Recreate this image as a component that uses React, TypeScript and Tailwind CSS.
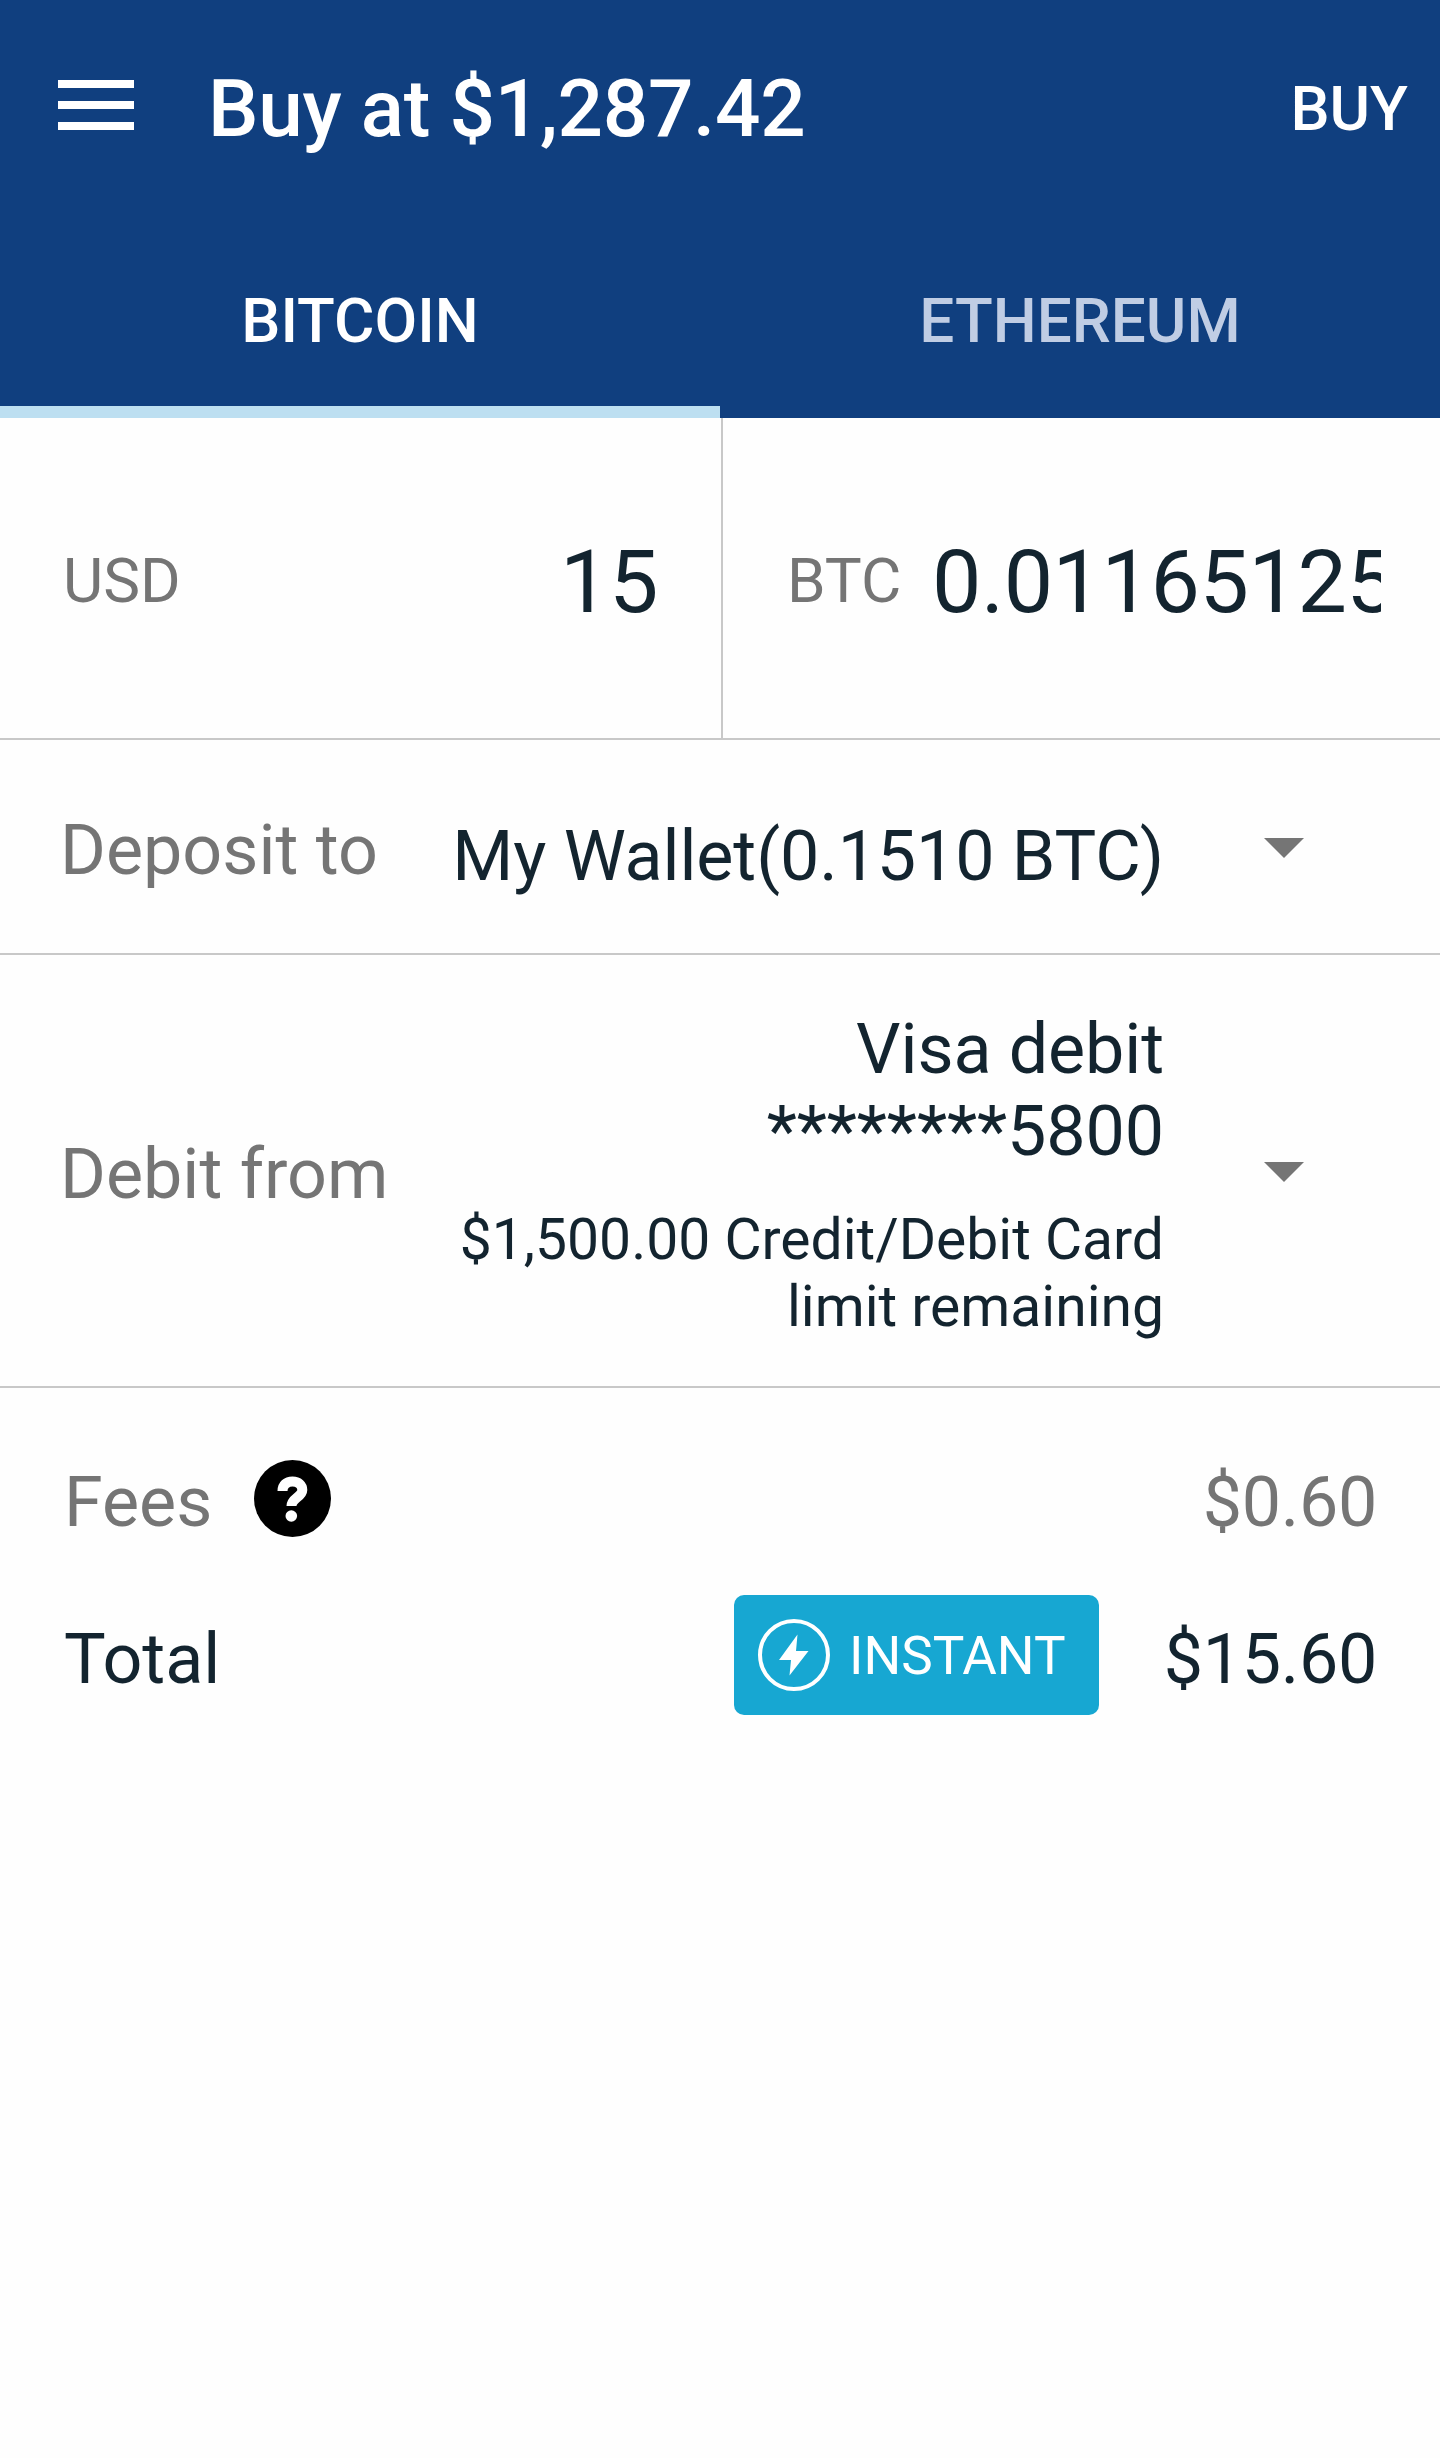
import React from "react";

function Caret() {
  return (
    <svg className="ml-[100px] mt-[3px] block h-5 w-10 shrink-0" viewBox="0 0 40 20" fill="#757575">
      <path d="M0 0H40L20 20Z" />
    </svg>
  );
}

export default function App() {
  return (
    <div className="h-[2458px] w-[1440px] overflow-hidden bg-[#fefefe] font-['Roboto',sans-serif] text-[#13242f]">
      <header className="flex h-[418px] flex-col bg-[#103f7f] font-medium text-white">
        <div className="flex h-[218px] items-center pl-[58px] pr-[32px]">
          <svg className="mb-[8px] block h-[50px] w-[76px]" viewBox="0 0 76 50" fill="white">
            <path d="M0 0h76v8H0zM0 21h76v8H0zM0 42h76v8H0z" />
          </svg>
          <h1 className="ml-[74px] flex-1 text-[80px] tracking-[-0.3px]">Buy at $1,287.42</h1>
          <button className="mb-[2px] text-[62px]">BUY</button>
        </div>
        <nav className="grid h-[200px] grid-cols-2 text-[62px]">
          <div className="flex items-center justify-center border-b-[12px] border-[#bddff1] pt-[16px]">BITCOIN</div>
          <div className="flex items-center justify-center border-b-[12px] border-transparent pt-[16px] text-[#c0cde4]">ETHEREUM</div>
        </nav>
      </header>
      <section className="flex h-[322px] border-b-2 border-[#c8c8c8]">
        <label className="flex w-[723px] items-center justify-between border-r-2 border-[#c8c8c8] pl-[63px] pr-[63px] pt-[5px]">
          <span className="text-[62px] text-[#757575]">USD</span>
          <span className="mt-[2px] text-[88px] tracking-[-0.5px]">15</span>
        </label>
        <label className="flex flex-1 items-center pl-[64px] pt-[5px]">
          <span className="w-[145px] text-[62px] text-[#757575]">BTC</span>
          <span className="mt-[2px] w-[449px] overflow-hidden whitespace-nowrap text-[88px] tracking-[-0.5px]">0.01165125</span>
        </label>
      </section>
      <section className="flex h-[215px] items-center border-b-2 border-[#c8c8c8] pl-[60px]">
        <span className="mt-[7px] w-[340px] text-[70px] text-[#757575]">Deposit to</span>
        <span className="mt-[19px] w-[764px] whitespace-nowrap text-right text-[70px] tracking-[-0.1px]">My Wallet(0.1510 BTC)</span>
        <Caret />
      </section>
      <section className="flex h-[433px] items-center border-b-2 border-[#c8c8c8] pl-[60px]">
        <span className="mt-[7px] w-[340px] text-[70px] text-[#757575]">Debit from</span>
        <div className="mt-[7px] w-[764px] text-right">
          <div className="text-[70px] leading-[82px] tracking-[-0.1px]">Visa debit<br />********5800</div>
          <div className="mt-[34px] text-[57px] leading-[67px]">$1,500.00 Credit/Debit Card<br />limit remaining</div>
        </div>
        <Caret />
      </section>
      <section className="pl-[64px] pr-[63px] pt-[49px] text-[70px]">
        <div className="flex h-[130px] items-center text-[#757575]">
          <span>Fees</span>
          <svg className="mb-[8px] ml-[42px] block size-[77px]" viewBox="0 0 77 77" fill="none">
            <circle cx="38.5" cy="38.5" r="38.5" fill="black" />
            <path d="M28.5 31C28.5 25 32.500 21.500 38.500 21.500C44.500 21.500 48.300 25 48.300 30C48.300 37 37.500 38 37.500 46" stroke="white" strokeWidth="10" />
            <circle cx="37.3" cy="56" r="5.800" fill="white" />
          </svg>
          <span className="ml-auto tracking-[-0.3px]">$0.60</span>
        </div>
        <div className="mt-[28px] flex h-[120px] items-center">
          <span className="mt-[8px] w-[670px]">Total</span>
          <span className="flex h-[120px] w-[365px] shrink-0 items-center rounded-[10px] bg-[#17a7d2] pl-[24px] text-[53px] text-white">
            <svg className="mr-[19px] size-[72px]" viewBox="0 0 72 72" fill="none">
              <circle cx="36" cy="36" r="34" stroke="white" strokeWidth="4" />
              <path d="M39.500 15.500L21 41H33L31.500 56.500L50.500 32H38Z" fill="white" />
            </svg>
            <span className="mt-[4px]">INSTANT</span>
          </span>
          <span className="ml-auto mt-[8px] tracking-[-0.3px]">$15.60</span>
        </div>
      </section>
    </div>
  );
}
